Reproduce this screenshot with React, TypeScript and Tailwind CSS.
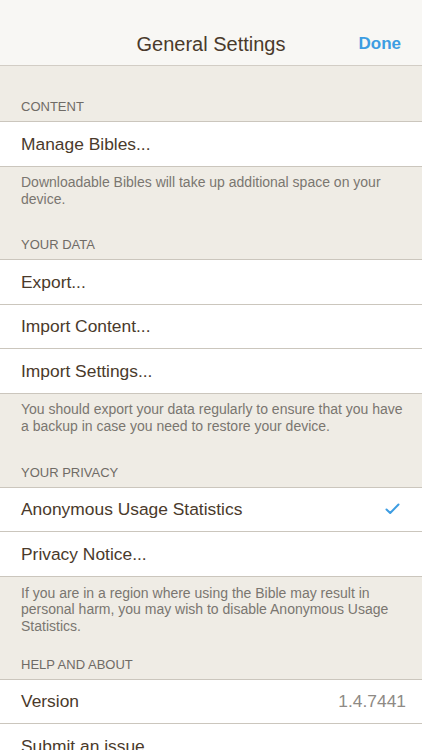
import React from "react";

const font = { fontFamily: '"Liberation Sans", Arial, sans-serif' };

function Row({ label, right }: { label: string; right?: React.ReactNode }) {
  return (
    <div className="flex h-[44.5px] items-center justify-between border-b border-[#cbc6bd] bg-white pl-[21px] pr-[16px]">
      <span className="text-[17.4px] text-[#4a3a2b]">{label}</span>
      {right}
    </div>
  );
}

function Header({ label, pt }: { label: string; pt: string }) {
  return (
    <div className={`${pt} border-b border-[#cbc6bd] pb-[6px] pl-[21px]`}>
      <div className="h-[16px] text-[13px] leading-[16px] text-[#6f6b66]">{label}</div>
    </div>
  );
}

function Footer({ children, pt = "pt-[7px]", lh = "leading-[17px]" }: { children: React.ReactNode; pt?: string; lh?: string }) {
  return (
    <div className={`${pt} ${lh} pl-[21px] pr-[14px] text-[14px] text-[#7a7670]`}>{children}</div>
  );
}

export default function App() {
  return (
    <div className="h-[750px] w-[422px] overflow-hidden bg-[#efece5]" style={font}>
      <div className="flex h-[66px] items-end border-b border-[#d2cdc5] bg-[#f8f7f4]">
        <div className="relative flex h-[42px] w-full items-center justify-center">
          <span className="text-[20px] text-[#4a3a2b]">General Settings</span>
          <span className="absolute right-[21px] text-[17px] font-bold text-[#3d9de2]">Done</span>
        </div>
      </div>

      <Header label="CONTENT" pt="pt-[33px]" />
      <Row label="Manage Bibles..." />
      <Footer>Downloadable Bibles will take up additional space on your device.</Footer>

      <Header label="YOUR DATA" pt="pt-[29.5px]" />
      <Row label="Export..." />
      <Row label="Import Content..." />
      <Row label="Import Settings..." />
      <Footer>You should export your data regularly to ensure that you have a backup in case you need to restore your device.</Footer>

      <Header label="YOUR PRIVACY" pt="pt-[30px]" />
      <Row
        label="Anonymous Usage Statistics"
        right={
          <svg width="15" height="12" viewBox="0 0 15 12" className="mr-[6px]">
            <path d="M1.5 6.5 L5.2 10 L13.5 1.5" fill="none" stroke="#3d9de2" strokeWidth="2" strokeLinecap="round" strokeLinejoin="round" />
          </svg>
        }
      />
      <Row label="Privacy Notice..." />
      <Footer pt="pt-[8px]" lh="leading-[16.5px]">
        If you are in a region where using the Bible may result in personal harm, you may wish to disable Anonymous Usage Statistics.
      </Footer>

      <Header label="HELP AND ABOUT" pt="pt-[22.5px]" />
      <Row label="Version" right={<span className="text-[17.4px] text-[#8e8a85]">1.4.7441</span>} />
      <Row label="Submit an issue..." />
    </div>
  );
}
